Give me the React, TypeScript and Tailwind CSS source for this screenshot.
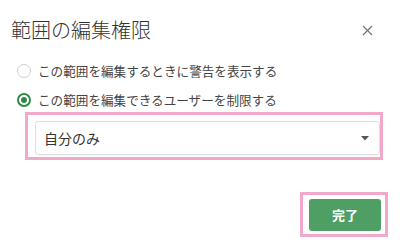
import React from "react";

const jp = { fontFamily: '"Noto Sans CJK JP", "Noto Sans", sans-serif' };

export default function App() {
  return (
    <div className="w-[400px] h-[251px] bg-white text-[#333]" style={jp}>
      <div className="flex items-center justify-between pl-[11px] pr-[27px] pt-[17px]">
        <div className="text-[20px] leading-[26px] font-light text-[#333]">範囲の編集権限</div>
        <svg width="11" height="11" viewBox="0 0 11 11" className="text-[#777]">
          <path d="M1 1 L10 10 M10 1 L1 10" stroke="currentColor" strokeWidth="1.2" />
        </svg>
      </div>
      <div className="mt-[21px] pl-[17px] flex flex-col gap-[15px]">
        <div className="flex items-center gap-[7px] h-[14px]">
          <span className="w-[14px] h-[14px] rounded-full border border-[#cfcfcf] bg-white" />
          <span className="text-[12.6px] leading-[14px] text-[#444]">この範囲を編集するときに警告を表示する</span>
        </div>
        <div className="flex items-center gap-[7px] h-[14px]">
          <span className="w-[14px] h-[14px] rounded-full border-2 border-[#2f8a46] bg-white flex items-center justify-center">
            <span className="w-[6px] h-[6px] rounded-full bg-[#2f8a46]" />
          </span>
          <span className="text-[12.6px] leading-[14px] text-[#444]">この範囲を編集できるユーザーを制限する</span>
        </div>
      </div>
      <div className="ml-[25px] mt-[5px] w-[358px] h-[48px] border-[3px] border-[#f2a9c9] pl-[7px] pt-[6px]">
        <div className="w-[345px] h-[34px] rounded-[3px] border border-[#e0e0e0] shadow-[0_1px_1px_rgba(0,0,0,0.04)] flex items-center justify-between pl-[8px] pr-[10px]">
          <span className="text-[14px] text-[#333]">自分のみ</span>
          <svg width="8" height="5" viewBox="0 0 8 5"><path d="M0 0 L8 0 L4 4.5 Z" fill="#555" /></svg>
        </div>
      </div>
      <div className="flex justify-end pr-[12px] mt-[32px]">
        <div className="w-[88px] h-[45px] border-[3px] border-[#f2a9c9] pl-[6px] pt-[4px]">
          <button className="w-[72px] h-[32px] rounded-[3px] bg-[#4f9e63] text-white text-[13px] font-bold flex items-center justify-center">完了</button>
        </div>
      </div>
    </div>
  );
}
